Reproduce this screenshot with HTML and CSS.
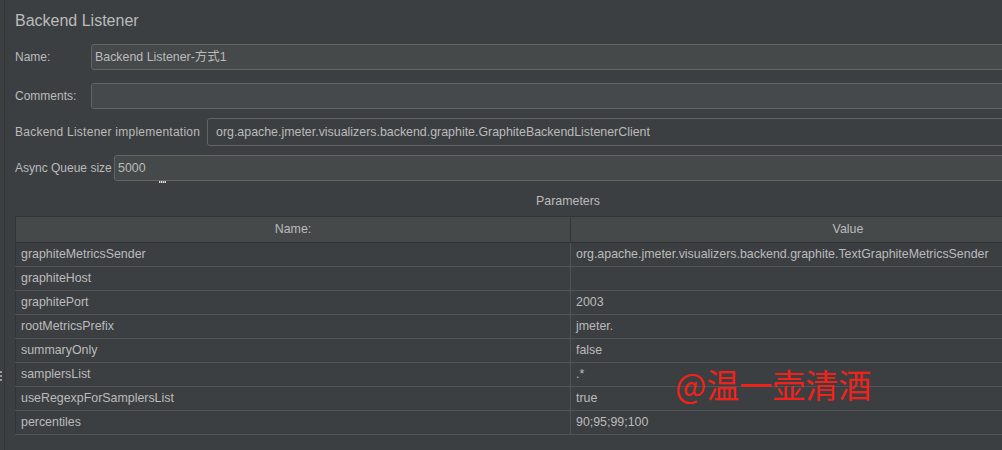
FILE: index.html
```html
<!DOCTYPE html>
<html>
<head>
<meta charset="utf-8">
<link rel="stylesheet" href="styles.css">
</head>
<body>
<div class="app">
  <div class="gutter"><span class="grip"></span></div>
  <div class="divider"></div>
  <div class="panel">
    <div class="title">Backend Listener</div>
    <div class="row r-name">
      <label class="lbl w-name">Name:</label>
      <div class="field">Backend Listener-方式1</div>
    </div>
    <div class="row r-comments">
      <label class="lbl w-name">Comments:</label>
      <div class="field"></div>
    </div>
    <div class="row r-impl">
      <label class="lbl w-impl">Backend Listener implementation</label>
      <div class="field combo">org.apache.jmeter.visualizers.backend.graphite.GraphiteBackendListenerClient</div>
    </div>
    <div class="row r-async">
      <label class="lbl w-async">Async Queue size</label>
      <div class="field async">5000<span class="cursor-mark"></span></div>
    </div>
    <div class="params-title">Parameters</div>
    <table class="params">
      <thead>
        <tr><th>Name:</th><th>Value</th></tr>
      </thead>
      <tbody>
        <tr><td>graphiteMetricsSender</td><td>org.apache.jmeter.visualizers.backend.graphite.TextGraphiteMetricsSender</td></tr>
        <tr><td>graphiteHost</td><td></td></tr>
        <tr><td>graphitePort</td><td>2003</td></tr>
        <tr><td>rootMetricsPrefix</td><td>jmeter.</td></tr>
        <tr><td>summaryOnly</td><td>false</td></tr>
        <tr><td>samplersList</td><td>.*</td></tr>
        <tr><td>useRegexpForSamplersList</td><td>true</td></tr>
        <tr><td>percentiles</td><td>90;95;99;100</td></tr>
      </tbody>
    </table>
    <div class="watermark">@温一壶清酒</div>
  </div>
</div>
</body>
</html>
```
FILE: styles.css
```css
html, body {
  margin: 0;
  padding: 0;
  background: #3c3f41;
  width: 1002px;
  height: 450px;
  overflow: hidden;
}
body {
  font-family: "Liberation Sans", Arial, "Noto Sans CJK SC", sans-serif;
  color: #bbbbbb;
  font-size: 12.4px;
}
.app {
  display: flex;
  width: 1002px;
  height: 450px;
  overflow: hidden;
}
.gutter {
  width: 4px;
  position: relative;
  flex: none;
}
.grip {
  position: absolute;
  left: 0;
  top: 371px;
  width: 2px;
  height: 10px;
  background: repeating-linear-gradient(to bottom, #9a9a9a 0 2px, transparent 2px 4px);
}
.divider {
  width: 1px;
  background: #333537;
  flex: none;
}
.panel {
  flex: none;
  width: 1200px;
  padding-left: 10px;
  position: relative;
}
.title {
  margin-top: 11px;
  font-size: 16px;
  line-height: 20px;
  color: #bbbbbb;
}
.row {
  display: flex;
  align-items: center;
}
.r-name { margin-top: 13px; }
.r-comments { margin-top: 13px; }
.r-impl { margin-top: 9px; }
.r-async { margin-top: 9px; }
.lbl {
  flex: none;
  line-height: 16px;
  font-size: 12px;
  white-space: nowrap;
}
.w-name { width: 76px; }
.w-impl { width: 192px; letter-spacing: 0.25px; }
.w-async { width: 99px; }
.field {
  flex: 1;
  height: 24px;
  border: 1px solid #646464;
  border-radius: 3px;
  background: #45494a;
  box-sizing: content-box;
  line-height: 24px;
  padding-left: 3px;
  color: #bbbbbb;
  white-space: nowrap;
  position: relative;
}
.combo {
  height: 26px;
  line-height: 26px;
  background: #3c3f41;
  padding-left: 8px;
}
.async {
  padding-left: 3px;
}
.cursor-mark {
  position: absolute;
  left: 44px;
  top: 25px;
  width: 7px;
  height: 2px;
  background: repeating-linear-gradient(to right, #e0e0e0 0 1px, #7a7a7a 1px 2px);
}
.params-title {
  margin-top: 12px;
  width: 1108px;
  line-height: 16px;
  height: 16px;
  margin-bottom: 7px;
  text-align: left;
  padding-left: 521px;
  box-sizing: border-box;
}
.params {
  border-collapse: collapse;
  table-layout: fixed;
  width: 1110px;
  border-left: 1px solid #323435;
  border-top: 1px solid #323435;
}
.params th {
  background: #45494a;
  font-weight: normal;
  height: 25px;
  padding: 0;
  text-align: center;
  border-bottom: 1px solid #2f3133;
  border-right: 1px solid #323435;
  width: 554px;
  line-height: 25px;
}
.params td {
  height: 23px;
  padding: 0 0 0 5px;
  border-bottom: 1px solid #515456;
  border-right: 1px solid #515456;
  line-height: 23px;
  white-space: nowrap;
  overflow: hidden;
}
.watermark {
  position: absolute;
  left: 670px;
  top: 364px;
  font-family: "Noto Sans CJK SC", sans-serif;
  font-size: 33px;
  line-height: 40px;
  color: #f0221a;
}
```
